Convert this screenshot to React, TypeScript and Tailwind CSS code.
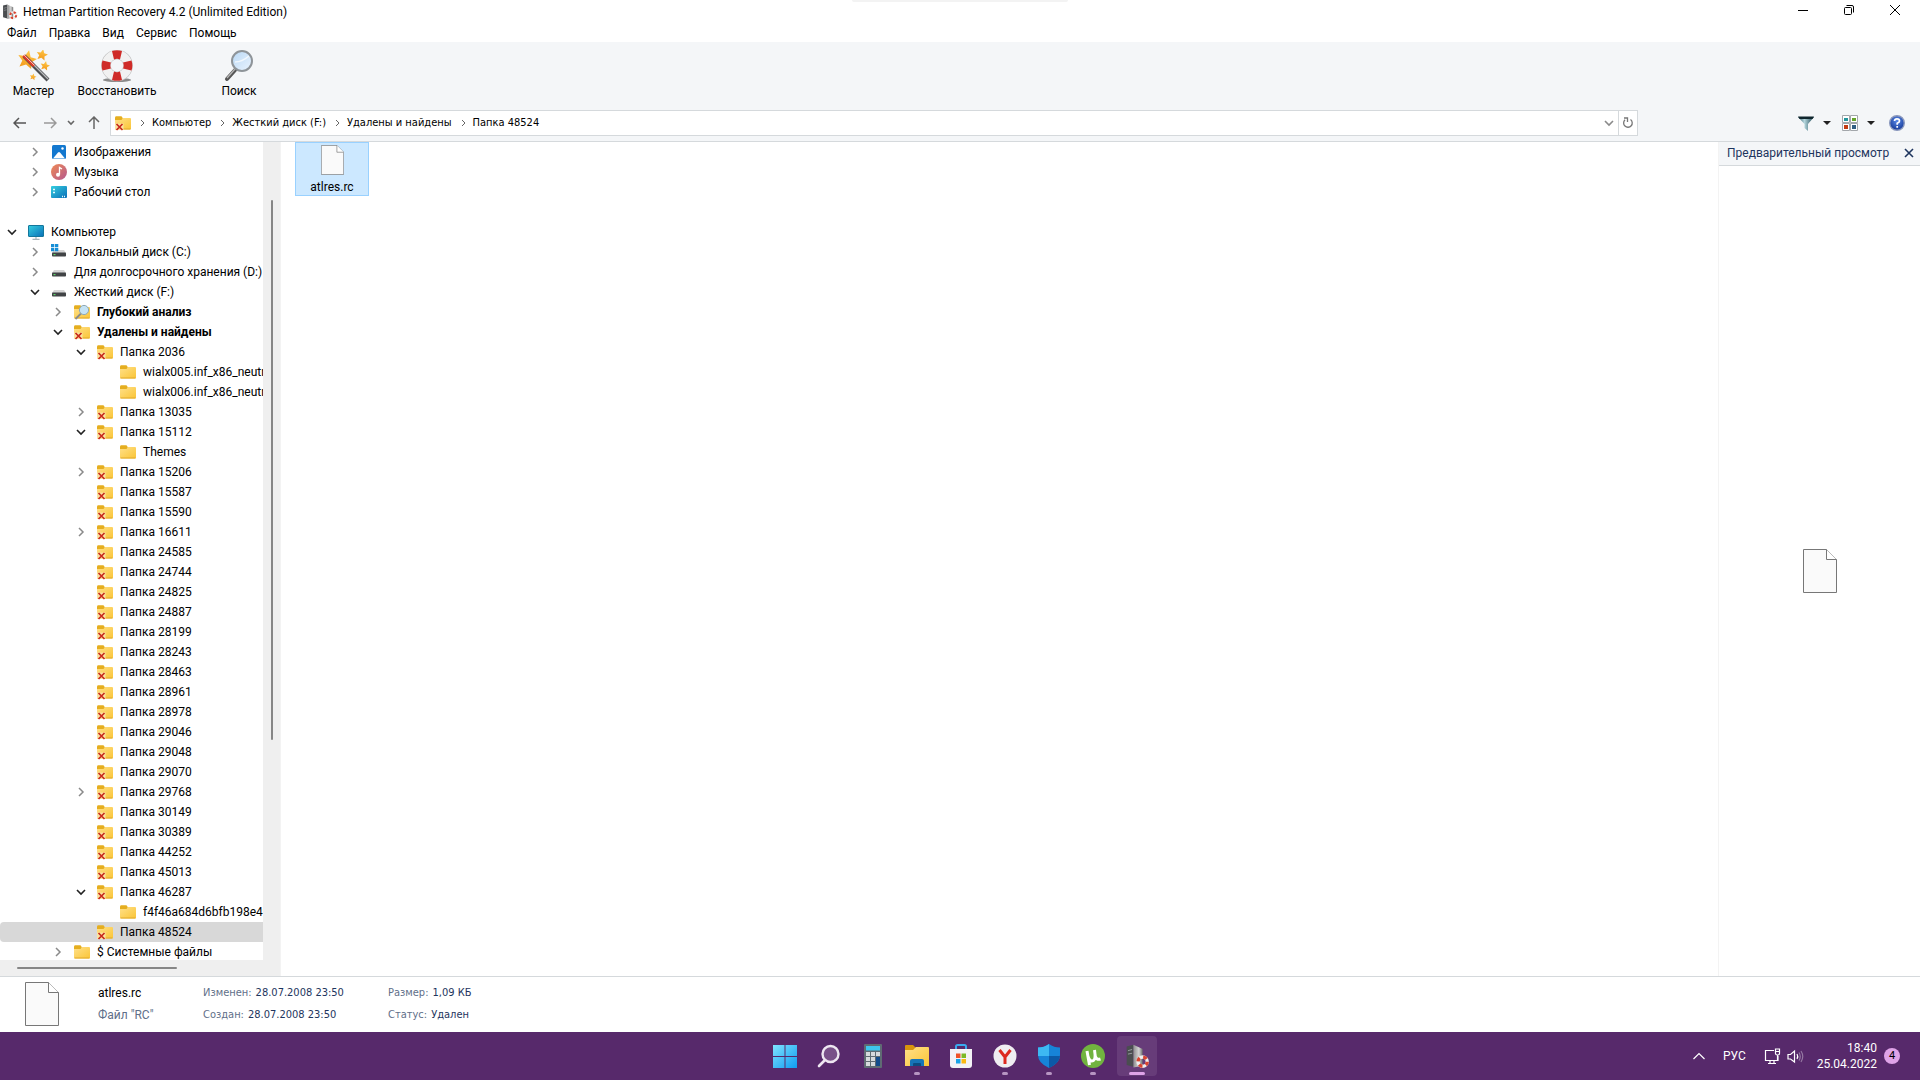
import React from "react";

type TreeItem = {
  level: number;
  icon: string;
  label: string;
  open?: boolean;
  bold?: boolean;
  selected?: boolean;
};

const deleted = (name: string, open?: boolean, selected?: boolean): TreeItem => ({
  level: 3,
  icon: "deleted",
  label: `Папка ${name}`,
  open,
  selected,
});

const tree: TreeItem[] = [
  { level: 1, icon: "pictures", label: "Изображения", open: false },
  { level: 1, icon: "music", label: "Музыка", open: false },
  { level: 1, icon: "desktop", label: "Рабочий стол", open: false },
  { level: 0, icon: "", label: "" },
  { level: 0, icon: "computer", label: "Компьютер", open: true },
  { level: 1, icon: "system", label: "Локальный диск (C:)", open: false },
  { level: 1, icon: "drive", label: "Для долгосрочного хранения (D:)", open: false },
  { level: 1, icon: "drive", label: "Жесткий диск (F:)", open: true },
  { level: 2, icon: "analysis", label: "Глубокий анализ", open: false, bold: true },
  { level: 2, icon: "deleted", label: "Удалены и найдены", open: true, bold: true },
  deleted("2036", true),
  { level: 4, icon: "folder", label: "wialx005.inf_x86_neutral" },
  { level: 4, icon: "folder", label: "wialx006.inf_x86_neutral" },
  deleted("13035", false),
  deleted("15112", true),
  { level: 4, icon: "folder", label: "Themes" },
  deleted("15206", false),
  deleted("15587"),
  deleted("15590"),
  deleted("16611", false),
  deleted("24585"),
  deleted("24744"),
  deleted("24825"),
  deleted("24887"),
  deleted("28199"),
  deleted("28243"),
  deleted("28463"),
  deleted("28961"),
  deleted("28978"),
  deleted("29046"),
  deleted("29048"),
  deleted("29070"),
  deleted("29768", false),
  deleted("30149"),
  deleted("30389"),
  deleted("44252"),
  deleted("45013"),
  deleted("46287", true),
  { level: 4, icon: "folder", label: "f4f46a684d6bfb198e493" },
  deleted("48524", undefined, true),
  { level: 2, icon: "folder", label: "$ Системные файлы", open: false },
];

const Gradients = () => (
  <svg className="absolute size-0" aria-hidden="true">
    <defs>
      <linearGradient id="folder" x1="0" y1="0" x2="1" y2="1">
        <stop offset="0" stopColor="#ffe08a" />
        <stop offset="1" stopColor="#fac536" />
      </linearGradient>
      <linearGradient id="screen" x1="0" y1="0" x2="1" y2="1">
        <stop offset="0" stopColor="#35cfe0" />
        <stop offset="1" stopColor="#0a6fb8" />
      </linearGradient>
      <linearGradient id="music" x1="0" y1="0" x2="1" y2="1">
        <stop offset="0" stopColor="#ef8a55" />
        <stop offset="1" stopColor="#b4588f" />
      </linearGradient>
      <linearGradient id="win" x1="0" y1="0" x2="1" y2="1">
        <stop offset="0" stopColor="#7fe3ff" />
        <stop offset="1" stopColor="#0f9bf0" />
      </linearGradient>
      <linearGradient id="star" x1="0" y1="0" x2="0" y2="1">
        <stop offset="0" stopColor="#ffc94a" />
        <stop offset="1" stopColor="#f39a1c" />
      </linearGradient>
      <linearGradient id="lens" x1="0" y1="0" x2="1" y2="1">
        <stop offset="0" stopColor="#b9d8f5" />
        <stop offset="1" stopColor="#eaf4ff" />
      </linearGradient>
      <linearGradient id="funnel" x1="0" y1="0" x2="1" y2="0">
        <stop offset="0" stopColor="#2d5a68" />
        <stop offset="0.4" stopColor="#b5d7de" />
        <stop offset="1" stopColor="#1c4552" />
      </linearGradient>
      <linearGradient id="tower" x1="0" y1="0" x2="1" y2="0">
        <stop offset="0" stopColor="#8f8f8f" />
        <stop offset="0.6" stopColor="#d4d4d4" />
        <stop offset="1" stopColor="#6d6d6d" />
      </linearGradient>
      <radialGradient id="help" cx="0.5" cy="0.35" r="0.6">
        <stop offset="0" stopColor="#5a8ae8" />
        <stop offset="1" stopColor="#1b3f9c" />
      </radialGradient>
    </defs>
  </svg>
);

const FolderShape = () => (
  <>
    <path d="M0 4V2.800Q0 1.300 1 1.300H6.500L8 3.500V6H0z" fill="#e5ae1f" />
    <path d="M0 5H6.500L8 3H15Q16 3 16 4V13.500Q16 14.500 15 14.500H1Q0 14.500 0 13.500z" fill="url(#folder)" />
    <path d="M0.500 14H15.500" stroke="#e0a92c" />
  </>
);

const TreeIcon = ({ name }: { name: string }) => (
  <svg viewBox="0 0 16 16" className="size-4 shrink-0" aria-hidden="true">
    {(name === "folder" || name === "deleted" || name === "analysis") && <FolderShape />}
    {name === "deleted" && (
      <>
        <path d="M0 8.500H8.500V15H0z" fill="#fbe3a0" />
        <path d="M1.500 9L7.500 15M7.500 9L1.500 15" stroke="#c8281c" strokeWidth="1.700" />
      </>
    )}
    {name === "analysis" && (
      <>
        <path d="M7 9.500L1.500 15" stroke="#8b8b8b" strokeWidth="1.800" />
        <circle cx="10" cy="6" r="4.600" fill="#c5e3f4" stroke="#8fa9b5" />
      </>
    )}
    {name === "pictures" && (
      <>
        <rect x="1" y="1" width="14" height="14" rx="1.500" fill="#1378cf" />
        <path d="M2 14.500L7 8.500Q8 7.500 9 8.500L14 14.500z" fill="#fff" />
        <circle cx="11.500" cy="4.500" r="1.200" fill="#fff" />
      </>
    )}
    {name === "music" && (
      <>
        <circle cx="8" cy="8" r="8" fill="url(#music)" />
        <path d="M8.500 10.500V3.500L11 5" stroke="#fff" strokeWidth="1.300" fill="none" />
        <circle cx="7" cy="10.800" r="2" fill="#fff" />
      </>
    )}
    {name === "desktop" && (
      <>
        <rect y="2" width="16" height="12" rx="1" fill="url(#screen)" />
        <path d="M2 5.500h2M2 8.500h2M11 12.500h1M13 12.500h1" stroke="#e4fbff" strokeWidth="1.500" />
      </>
    )}
    {name === "computer" && (
      <>
        <rect x="0.500" y="1.500" width="15" height="11" rx="0.500" fill="url(#screen)" stroke="#14779c" />
        <path d="M8 13v2M4.500 15.300h7" stroke="#a9b4ba" strokeWidth="1.200" />
      </>
    )}
    {(name === "drive" || name === "system") && (
      <>
        <path d="M3 6H13L15 9H1z" fill="#d5d5d5" />
        <rect x="1" y="8.500" width="14" height="4" rx="0.800" fill="#414446" />
        <rect x="2.500" y="10" width="2" height="1.200" fill="#61d36b" />
      </>
    )}
    {name === "system" && (
      <path d="M0 0h3.300v3.300h-3.300zM4 0h3.300v3.300h-3.300zM0 4h3.300v3.300h-3.300zM4 4h3.300v3.300h-3.300z" fill="#168ed6" />
    )}
  </svg>
);

const Chevron = ({ open }: { open?: boolean }) => (
  <svg viewBox="0 0 12 12" className="size-3" fill="none" aria-hidden="true">
    {open ? (
      <path d="M2 4L6 8L10 4" stroke="#222" strokeWidth="1.600" />
    ) : (
      <path d="M4 2L8 6L4 10" stroke="#8a8a8a" strokeWidth="1.500" />
    )}
  </svg>
);

const FileIcon = ({ className }: { className: string }) => (
  <svg viewBox="0 0 34 44" className={className} aria-hidden="true">
    <path d="M0.500 0.500H23.500L33.500 10.500V43.500H0.500z" fill="#fafafa" stroke="#777" />
    <path d="M23.500 0.500V10.500H33.500" fill="#fff" stroke="#777" />
  </svg>
);

const Tower = () => (
  <>
    <path d="M2 3L10 1V27L2 25z" fill="#4a4d50" />
    <path d="M10 1L21 6V26L10 28z" fill="url(#tower)" />
    <path d="M3.500 8L8.500 6.500M3.500 12L8.500 11" stroke="#a5a8ab" />
    <circle cx="21" cy="21" r="5.500" fill="none" stroke="#eee" strokeWidth="4" />
    <circle cx="21" cy="21" r="5.500" fill="none" stroke="#d9432f" strokeWidth="4" strokeDasharray="4.320 4.320" />
  </>
);

const Star = ({ x, y, r }: { x: number; y: number; r: number }) => (
  <path
    transform={`translate(${x} ${y}) scale(${r}) rotate(12)`}
    d="M0-1L.3-.35L.95-.3L.45.15L.6.8L0 .45L-.6.8L-.45.15L-.95-.3L-.3-.35z"
    fill="url(#star)"
  />
);

const WandIcon = () => (
  <svg viewBox="0 0 32 32" className="size-8" aria-hidden="true">
    <Star x={9} y={10} r={10} />
    <Star x={24} y={5} r={6} />
    <Star x={27} y={16} r={5} />
    <Star x={15} y={27} r={3.5} />
    <path d="M6 6L30 30" stroke="#4d4f52" strokeWidth="4" />
    <path d="M6.500 5.500L30 29" stroke="#b9bbbd" strokeWidth="1.300" />
    <path d="M5.500 5.500L16 16" stroke="#e03a28" strokeWidth="3" />
    <path d="M6 5L16.500 15.500" stroke="#ffb9a8" strokeWidth="1" />
  </svg>
);

const LifebuoyIcon = () => (
  <svg viewBox="0 0 32 32" className="size-8" aria-hidden="true">
    <ellipse cx="16" cy="30" rx="14" ry="2" fill="#8a8a8a" />
    <circle cx="16" cy="15.500" r="11" fill="none" stroke="#bdbdbd" strokeWidth="9.500" />
    <circle cx="16" cy="15.500" r="11" fill="none" stroke="#f1f1f1" strokeWidth="8.500" />
    <path
      d="M11 1L13 9.500A7 7 0 0 1 19 9.500L21 1A15.500 15.500 0 0 0 11 1zM11 30L13 21.500A7 7 0 0 0 19 21.500L21 30A15.500 15.500 0 0 1 11 30zM1.500 10.500L10 12.500A7 7 0 0 0 10 18.500L1.500 20.500A15.500 15.500 0 0 1 1.500 10.500zM30.500 10.500L22 12.500A7 7 0 0 1 22 18.500L30.500 20.500A15.500 15.500 0 0 0 30.500 10.500z"
      fill="#cf2b28"
    />
  </svg>
);

const SearchIcon = () => (
  <svg viewBox="0 0 32 32" className="size-8" aria-hidden="true">
    <path d="M13 19L4 29" stroke="#565656" strokeWidth="4" strokeLinecap="round" />
    <path d="M12 19L4 28" stroke="#b5b5b5" strokeWidth="1.300" />
    <circle cx="19" cy="11" r="10" fill="url(#lens)" stroke="#8e9499" strokeWidth="2" />
    <path d="M12 12Q19 12 26 6" stroke="#fff" fill="none" strokeWidth="1.500" opacity="0.700" />
  </svg>
);

const ToolButton = ({ label, className, children }: { label: string; className: string; children: React.ReactNode }) => (
  <button className={`flex flex-col items-center gap-px text-[12px] leading-4 ${className}`}>
    {children}
    <span>{label}</span>
  </button>
);

const taskbarApps = ["Пуск", "Поиск", "Калькулятор", "Проводник", "Store", "Yandex", "Защитник", "uTorrent", "Hetman"];

const TaskIcon = ({ index }: { index: number }) => (
  <svg viewBox="0 0 24 24" className="size-6" aria-hidden="true">
    {index === 0 && <path d="M0 1h11.500v11h-11.500zM12.500 1h11.500v11h-11.500zM0 13h11.500v11h-11.500zM12.500 13h11.500v11h-11.500z" fill="url(#win)" />}
    {index === 1 && (
      <>
        <circle cx="13.500" cy="10" r="8" fill="#795089" stroke="#eee6f1" strokeWidth="2.400" />
        <path d="M7.500 16.500L2 22" stroke="#eee6f1" strokeWidth="2.600" strokeLinecap="round" />
      </>
    )}
    {index === 2 && (
      <>
        <rect x="3" y="0" width="18" height="24" rx="1" fill="#5f6b73" />
        <rect x="5" y="2" width="14" height="4.500" fill="#3ec7ee" />
        <path d="M5 8h4v4H5zM10 8h4v4h-4zM15 8h4v4h-4zM5 13h4v4H5zM10 13h4v4h-4zM5 18h4v4H5zM10 18h4v4h-4z" fill="#d6dadd" />
        <path d="M15 13h4v9h-4z" fill="#124c8c" />
      </>
    )}
    {index === 3 && (
      <>
        <path d="M0 2Q0 1 1 1H8L11 4V7H0z" fill="#d8940c" />
        <path d="M0 6H8L11 3H23Q24 3 24 4V22H0z" fill="url(#folder)" />
        <path d="M5 22V17Q5 15 7 15H17Q19 15 19 17V22z" fill="#1674b8" />
        <path d="M8 22V20Q8 19 9 19H15Q16 19 16 20V22z" fill="#0d4c82" />
      </>
    )}
    {index === 4 && (
      <>
        <path d="M7 7V2.500Q7 1 8.500 1H15.500Q17 1 17 2.500V7" fill="none" stroke="#3aa9ee" strokeWidth="2" />
        <path d="M1 5H23V21Q23 24 20 24H4Q1 24 1 21z" fill="#f3f2f6" />
        <path d="M7 9.500h4.500v4.500H7z" fill="#ef5329" />
        <path d="M12.500 9.500h4.500v4.500h-4.500z" fill="#7cb928" />
        <path d="M7 15h4.500v4.500H7z" fill="#1ba3e8" />
        <path d="M12.500 15h4.500v4.500h-4.500z" fill="#fbb913" />
      </>
    )}
    {index === 5 && (
      <>
        <circle cx="12" cy="12" r="11.500" fill="#efedf1" />
        <path d="M6.500 6L12 13L17.500 6M12 12.500V20" fill="none" stroke="#dd2a20" strokeWidth="3" />
      </>
    )}
    {index === 6 && (
      <>
        <path d="M12 0Q7 3.500 1 3.500V11Q1 19 12 24Q23 19 23 11V3.500Q17 3.500 12 0z" fill="#1784d8" />
        <path d="M12 0Q7 3.500 1 3.500V11V12H12z" fill="#3db8f2" />
        <path d="M12 12H23Q22 19.500 12 24z" fill="#0c59a6" />
      </>
    )}
    {index === 7 && (
      <>
        <circle cx="12" cy="12" r="12" fill="#71b33f" />
        <path d="M6 7L8.500 21M7.200 13Q9 18.500 12.500 16.500Q15 15 13.500 6M14 11Q15 16.500 19.500 15" fill="none" stroke="#fff" strokeWidth="3" />
      </>
    )}
    {index === 8 && (
      <g transform="scale(.84)">
        <Tower />
      </g>
    )}
  </svg>
);

const Crumb = ({ label }: { label: string }) => (
  <>
    <svg viewBox="0 0 8 8" className="mr-[5px] ml-2 size-2" fill="none" aria-hidden="true">
      <path d="M2 1L5 4L2 7" stroke="#666" />
    </svg>
    <button className="pt-px">{label}</button>
  </>
);

const Caret = () => (
  <svg viewBox="0 0 8 4" className="h-1 w-2" aria-hidden="true">
    <path d="M0 0H8L4 4z" fill="#222" />
  </svg>
);

const Detail = ({ name, value }: { name: string; value: string }) => (
  <div className="flex gap-1">
    <dt className="text-[#5f6f89]">{name}:</dt>
    <dd className="text-[#1e355e]">{value}</dd>
  </div>
);

const App = () => {
  return (
    <div className="flex h-screen flex-col overflow-hidden bg-white font-[Roboto,'Noto_Sans',sans-serif] text-[12px] text-black">
      <Gradients />
      <div className="absolute top-0 left-1/2 h-[2px] w-[216px] -translate-x-1/2 rounded-b bg-[#f3f3f3]" />
      <header className="flex h-[23px] shrink-0 items-center pl-[2px]">
        <svg viewBox="0 0 30 30" className="size-4" aria-hidden="true">
          <Tower />
        </svg>
        <h1 className="ml-[5px] text-[12px] leading-4">Hetman Partition Recovery 4.2 (Unlimited Edition)</h1>
        <div className="ml-auto flex pr-[2px] pb-[3px]">
          <button aria-label="Свернуть" className="flex w-[46px] justify-center">
            <svg viewBox="0 0 12 12" className="size-3" stroke="#000" fill="none">
              <path d="M1 6.500H11" />
            </svg>
          </button>
          <button aria-label="Восстановить окно" className="flex w-[46px] justify-center">
            <svg viewBox="0 0 12 12" className="size-3" stroke="#000" fill="none">
              <rect x="1.500" y="3.500" width="7" height="7" rx="1" />
              <path d="M3.500 1.500H9Q10.500 1.500 10.500 3V8.500" />
            </svg>
          </button>
          <button aria-label="Закрыть" className="flex w-[46px] justify-center">
            <svg viewBox="0 0 12 12" className="size-3" stroke="#000" fill="none">
              <path d="M1 1L11 11M11 1L1 11" />
            </svg>
          </button>
        </div>
      </header>
      <nav className="flex h-[19px] shrink-0 items-center gap-3 pl-[7px]">
        <button>Файл</button>
        <button>Правка</button>
        <button>Вид</button>
        <button>Сервис</button>
        <button>Помощь</button>
      </nav>

      <section className="flex h-[63px] shrink-0 items-start bg-[#f4f6f8] pt-2">
        <ToolButton label="Мастер" className="w-[67px]">
          <WandIcon />
        </ToolButton>
        <ToolButton label="Восстановить" className="w-[100px]">
          <LifebuoyIcon />
        </ToolButton>
        <ToolButton label="Поиск" className="ml-[42px] w-[60px]">
          <SearchIcon />
        </ToolButton>
      </section>

      <section className="flex h-[37px] shrink-0 items-center border-b border-[#d5d9dc] bg-[#f4f6f8] font-['DejaVu_Sans_Condensed','DejaVu_Sans',sans-serif] text-[11px]">
        <div className="flex w-[110px] shrink-0 items-center pl-[13px]">
          <button aria-label="Назад">
            <svg viewBox="0 0 14 14" className="size-[14px]" stroke="#555" strokeWidth="1.500" fill="none">
              <path d="M1 7H13M6 2L1 7L6 12" />
            </svg>
          </button>
          <button aria-label="Вперёд" className="ml-4">
            <svg viewBox="0 0 14 14" className="size-[14px]" stroke="#999" strokeWidth="1.500" fill="none">
              <path d="M1 7H13M8 2L13 7L8 12" />
            </svg>
          </button>
          <button aria-label="Журнал" className="ml-[10px]">
            <svg viewBox="0 0 8 8" className="size-2" stroke="#666" strokeWidth="1.600" fill="none">
              <path d="M1 2L4 5L7 2" />
            </svg>
          </button>
          <button aria-label="Вверх" className="ml-3">
            <svg viewBox="0 0 14 14" className="size-[14px]" stroke="#666" strokeWidth="1.500" fill="none">
              <path d="M7 13V1M2 6L7 1L12 6" />
            </svg>
          </button>
        </div>
        <div className="flex h-[26px] flex-1 items-center border border-[#d5d9dc] bg-white pl-1">
          <TreeIcon name="deleted" />
          <Crumb label="Компьютер" />
          <Crumb label="Жесткий диск (F:)" />
          <Crumb label="Удалены и найдены" />
          <Crumb label="Папка 48524" />
          <button aria-label="Показать адреса" className="mr-1 ml-auto">
            <svg viewBox="0 0 10 10" className="size-[10px]" stroke="#8a8a8a" strokeWidth="1.600" fill="none">
              <path d="M1 3L5 7L9 3" />
            </svg>
          </button>
          <button aria-label="Обновить" className="flex h-full w-[19px] items-center justify-center border-l border-[#d5d9dc]">
            <svg viewBox="0 0 12 12" className="size-3" stroke="#777" strokeWidth="1.300" fill="none">
              <path d="M3 2.800A4.300 4.300 0 1 0 8.500 2.500M2 1H5.500V5" />
            </svg>
          </button>
        </div>
        <div className="flex w-[282px] shrink-0 items-center justify-end pr-[15px]">
          <button aria-label="Фильтр">
            <svg viewBox="0 0 16 16" className="size-4">
              <path d="M0 2H16L10 9V16L6.500 13V9z" fill="url(#funnel)" />
              <path d="M0 1.500H16L14.500 4H1.500z" fill="#10272e" />
            </svg>
          </button>
          <button aria-label="Параметры фильтра" className="ml-[9px]">
            <Caret />
          </button>
          <button aria-label="Вид значков" className="ml-[11px]">
            <svg viewBox="0 0 16 16" className="size-4">
              <path d="M0.500 0.500h7v7h-7zM8.500 0.500h7v7h-7zM0.500 8.500h7v7h-7zM8.500 8.500h7v7h-7z" fill="#fff" stroke="#a3a7ab" />
              <path d="M2 3h4v3H2z" fill="#23969c" />
              <path d="M10 3h4v3h-4z" fill="#65a52a" />
              <path d="M2 10h4v4H2z" fill="#c33b12" />
              <path d="M10 10h4v4h-4z" fill="#325f83" />
            </svg>
          </button>
          <button aria-label="Параметры вида" className="ml-[9px]">
            <Caret />
          </button>
          <button aria-label="Справка" className="ml-[14px]">
            <svg viewBox="0 0 16 16" className="size-4">
              <circle cx="8" cy="8" r="7.300" fill="url(#help)" stroke="#8a98bd" strokeWidth="1.400" />
              <path d="M5.500 6Q5.700 3.800 8 3.800Q10.500 3.800 10.500 6Q10.500 7.300 8.200 8.300V9.800M8.200 11V12.700" stroke="#fff" strokeWidth="1.700" fill="none" />
            </svg>
          </button>
        </div>
      </section>

      <main className="flex min-h-0 flex-1">
        <aside className="flex w-[281px] shrink-0 flex-col border-r border-[#f3f3f3] bg-[#efefef]">
          <div className="flex min-h-0 flex-1">
            <ul className="min-w-0 flex-1 overflow-hidden bg-white">
              {tree.map((item, i) => (
                <li key={i} className={`h-5 overflow-hidden ${item.selected ? "rounded-l bg-[#d8d8d8]" : ""}`}>
                  {item.label && (
                    <button className="flex h-5 items-center whitespace-nowrap" style={{ paddingLeft: item.level * 23 }}>
                      <span className="mr-1 flex w-6 justify-center">
                        {item.open !== undefined && <Chevron open={item.open} />}
                      </span>
                      <TreeIcon name={item.icon} />
                      <span className={`ml-[7px] ${item.bold ? "font-bold" : ""}`}>{item.label}</span>
                    </button>
                  )}
                </li>
              ))}
            </ul>
            <div className="flex w-[17px] justify-center pt-[58px]">
              <div className="h-[540px] w-[2px] rounded bg-[#868686]" />
            </div>
          </div>
          <div className="flex h-4 shrink-0 items-center pl-[17px]">
            <div className="h-[2px] w-40 rounded bg-[#868686]" />
          </div>
        </aside>
        <section className="min-w-0 flex-1 pl-[14px]">
          <button className="flex h-[54px] w-[74px] flex-col items-center border border-[#99d1ff] bg-[#cce8ff] pt-[2px]">
            <FileIcon className="h-[30px] w-[23px]" />
            <span className="mt-1 leading-4">atlres.rc</span>
          </button>
        </section>
        <aside className="flex w-[202px] shrink-0 flex-col border-l border-[#f3f3f3]">
          <div className="flex h-6 items-center justify-between border-b border-[#d5d9dc] bg-[#f4f6f8] pr-[6px] pb-px pl-2 text-[#1e355e]">
            <h2>Предварительный просмотр</h2>
            <button aria-label="Закрыть просмотр">
              <svg viewBox="0 0 10 10" className="size-[10px]" stroke="#1e355e" strokeWidth="1.600">
                <path d="M1 1L9 9M9 1L1 9" />
              </svg>
            </button>
          </div>
          <div className="flex flex-1 items-center justify-center">
            <FileIcon className="h-11 w-[34px]" />
          </div>
        </aside>
      </main>

      <section className="flex h-14 shrink-0 items-start border-t border-[#d5d9dc] bg-white pt-[5px]">
        <FileIcon className="mr-[39px] ml-[25px] h-11 w-[34px]" />
        <div className="w-[105px] leading-[22px]">
          <p>atlres.rc</p>
          <p className="text-[#5f6f89]">Файл "RC"</p>
        </div>
        <dl className="w-[185px] font-['DejaVu_Sans_Condensed','DejaVu_Sans',sans-serif] text-[11px] leading-[22px]">
          <Detail name="Изменен" value="28.07.2008 23:50" />
          <Detail name="Создан" value="28.07.2008 23:50" />
        </dl>
        <dl className="font-['DejaVu_Sans_Condensed','DejaVu_Sans',sans-serif] text-[11px] leading-[22px]">
          <Detail name="Размер" value="1,09 КБ" />
          <Detail name="Статус" value="Удален" />
        </dl>
      </section>

      <footer className="grid h-12 shrink-0 grid-cols-[1fr_auto_1fr] items-center bg-[#57296b] text-white">
        <div />
        <div className="flex gap-1 pl-[2px]">
          {taskbarApps.map((app, i) => (
            <button
              key={app}
              aria-label={app}
              className={`flex h-10 w-10 flex-col items-center rounded pt-2 ${i === 8 ? "bg-[#673c79]" : ""}`}
            >
              <TaskIcon index={i} />
              {(i === 3 || (i > 4 && i < 8)) && <span className="mt-1 h-[3px] w-[6px] rounded-full bg-[#b795c2]" />}
              {i === 8 && <span className="mt-1 h-[3px] w-4 rounded-full bg-[#dfa3e8]" />}
            </button>
          ))}
        </div>
        <div className="flex items-center justify-end pr-5 leading-4">
          <button aria-label="Скрытые значки">
            <svg viewBox="0 0 12 12" className="size-3" stroke="#fff" strokeWidth="1.200" fill="none">
              <path d="M0.500 9L6 3.500L11.500 9" />
            </svg>
          </button>
          <button className="ml-[18px]">РУС</button>
          <button aria-label="Сеть и звук" className="ml-[18px] flex gap-[6px]">
            <svg viewBox="0 0 17 17" className="size-[17px]" stroke="#fff" strokeWidth="1.200" fill="none">
              <path d="M10 2.500H1.500V12.500H14V8M4 15.500H12M6 12.500V15.500M10 12.500V15.500M11.500 1H15.500V5.500Q15.500 7 13.500 7Q11.500 7 11.500 5.500zM11.500 3.500H15.500M13.500 7V12" />
            </svg>
            <svg viewBox="0 0 17 17" className="size-[17px]" stroke="#fff" strokeWidth="1.200" fill="none">
              <path d="M1 6.500H3.500L7.500 3V14L3.500 11H1z" />
              <path d="M10 6Q11.500 8.500 10 11" />
              <path d="M12 4.500Q14.500 8.500 12 12.500M14 3Q17.500 8.500 14 14" stroke="#9578a2" />
            </svg>
          </button>
          <button className="ml-[13px] text-right">
            <span className="block">18:40</span>
            <span className="block">25.04.2022</span>
          </button>
          <button className="ml-[7px] size-4 rounded-full bg-[#dfa3e8] text-[11px] leading-4 text-black">4</button>
        </div>
      </footer>
    </div>
  );
};

export default App;
